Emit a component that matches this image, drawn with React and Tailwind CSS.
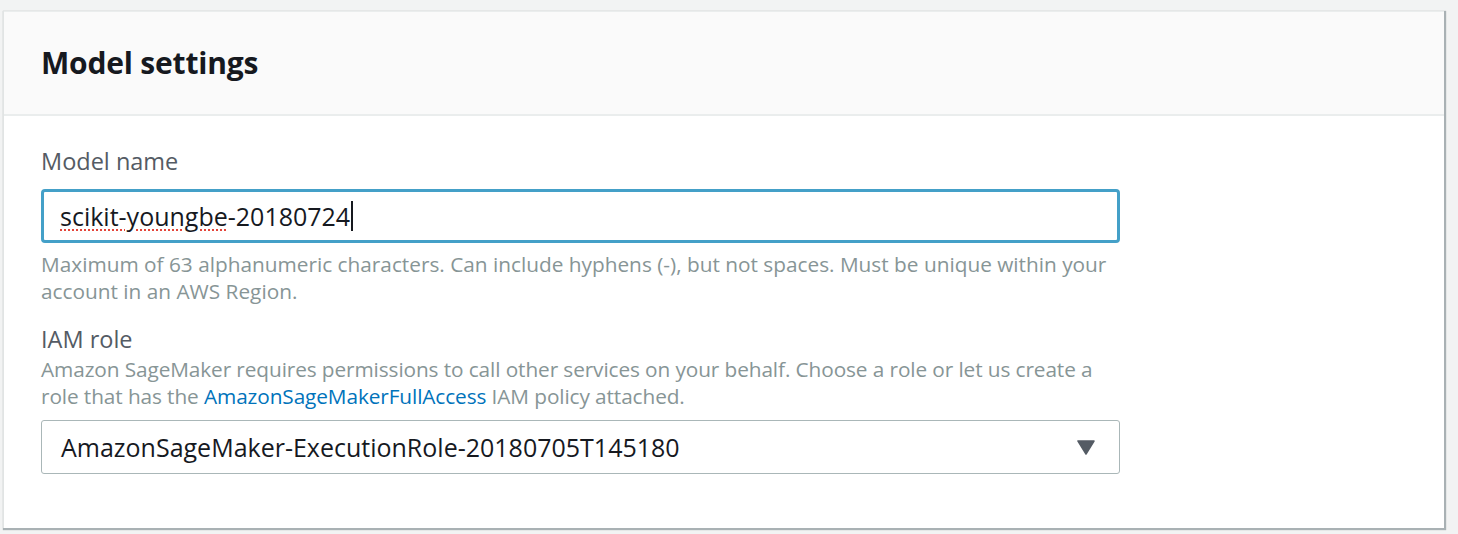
import React from "react";

export default function App() {
  return (
    <div
      className="min-h-[534px] bg-[#f2f3f3] pt-[11px] pl-[3px] pr-[14px]"
      style={{ fontFamily: "'Open Sans', 'Noto Sans', sans-serif" }}
    >
      <div className="w-[1441px] bg-white border-l border-[#e1e4e4] shadow-[1px_1px_1px_1px_rgba(0,28,36,0.3)]">
        {/* Header */}
        <div className="h-[105px] bg-[#fafafa] border-b-2 border-[#eaeded] border-t border-t-[#eaeded] flex items-center pl-[37px]">
          <h2 className="text-[30px] font-bold text-[#16191f] leading-none tracking-[-0.2px]">Model settings</h2>
        </div>

        {/* Body */}
        <div className="pl-[37px] pr-[324px] pt-[29px] pb-[54px]">
          <label className="block text-[23.5px] leading-[32px] text-[#545b64]">Model name</label>
          <div className="mt-[12px] h-[54px] border-[3px] border-[#44a0c8] rounded-[4px] flex items-center pl-[16px]">
            <span className="text-[25px] text-[#16191f] leading-none">
              <span className="underline decoration-dotted decoration-[#e4453a] decoration-2 underline-offset-4">scikit-youngbe</span>
              -20180724
            </span>
            <span className="w-[2px] h-[30px] bg-[#16191f] ml-[1px]" />
          </div>
          <p className="mt-[8px] text-[20.8px] leading-[27px] text-[#879596]">
            Maximum of 63 alphanumeric characters. Can include hyphens (-), but not spaces. Must be unique within your
            <br />
            account in an AWS Region.
          </p>

          <label className="block mt-[18px] text-[23.5px] leading-[32px] text-[#545b64]">IAM role</label>
          <p className="mt-[1px] text-[20.8px] leading-[27px] text-[#879596] tracking-[-0.1px]">
            Amazon SageMaker requires permissions to call other services on your behalf. Choose a role or let us create a
            <br />
            role that has the <span className="text-[#0073bb]">AmazonSageMakerFullAccess</span> IAM policy attached.
          </p>
          <div className="mt-[10px] h-[54px] border border-[#aab7b8] rounded-[3px] flex items-center justify-between pl-[19px] pr-[24px]">
            <span className="text-[25px] text-[#16191f] leading-none">AmazonSageMaker-ExecutionRole-20180705T145180</span>
            <svg width="18" height="15" viewBox="0 0 18 15">
              <path d="M1 1 H17 L9 14 Z" fill="#545b64" stroke="#545b64" strokeWidth="1.5" strokeLinejoin="round" />
            </svg>
          </div>
        </div>
      </div>
    </div>
  );
}
